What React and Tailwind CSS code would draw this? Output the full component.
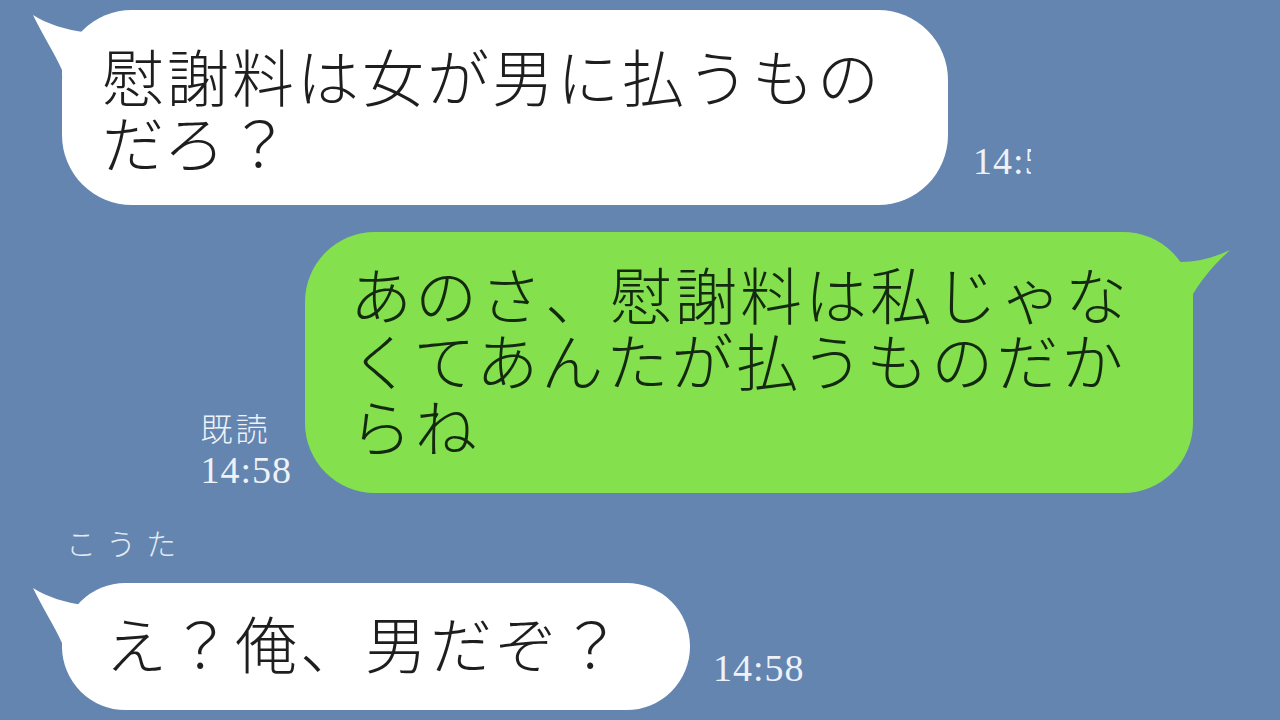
const cjk = "font-['Noto_Sans_CJK_JP','Noto_Sans_CJK_SC',sans-serif]"
const serif = "font-['Liberation_Serif',serif]"

// 左側（相手）の吹き出しのしっぽ
const LeftTail = () => (
  <svg className="absolute left-[-30px] top-0" width="80" height="66" viewBox="0 0 80 66">
    <path d="M1,5 C15,14 35,20 51,22 L80,12 L80,66 L30,66 L30,60 C22,42 10,24 1,5 Z" fill="#ffffff" />
  </svg>
)

// 右側（自分）の吹き出しのしっぽ
const RightTail = () => (
  <svg className="absolute right-[-40px] top-0" width="80" height="72" viewBox="0 0 80 72">
    <path d="M77,18 C60,26 45,30 27,30 L0,20 L0,72 L40,72 L40,62 C50,45 64,30 77,18 Z" fill="#84e14d" />
  </svg>
)

const Time = ({ children, className = "" }) => (
  <div className={`${serif} text-[38px] leading-[38px] tracking-[1px] text-[#eef2f8] whitespace-nowrap ${className}`}>
    {children}
  </div>
)

const App = () => {
  return (
    <div className={`w-[1280px] h-[720px] overflow-hidden bg-[#6385b0] ${cjk}`}>
      {/* 相手のメッセージ 1 */}
      <div className="flex items-end pt-[10px] pl-[62px]">
        <div className="relative w-[886px] h-[195px] rounded-[70px] bg-white pl-[40px] pt-[32px] text-[62px] leading-[66px] tracking-[3px] text-[#1e1e1e] font-light">
          <LeftTail />
          <div className="relative whitespace-nowrap">慰謝料は女が男に払うもの</div>
          <div className="relative whitespace-nowrap">だろ？</div>
        </div>
        <Time className="ml-[25px] mb-[25px] w-[58px] overflow-hidden">14:58</Time>
      </div>

      {/* 自分のメッセージ */}
      <div className="flex items-end justify-end mt-[27px] pr-[87px]">
        <div className="flex flex-col items-start mr-[13px] mb-[4px]">
          <div className={`${cjk} text-[32px] leading-[36px] tracking-[3px] text-[#eef2f8] font-light`}>既読</div>
          <Time className="mt-[6px]">14:58</Time>
        </div>
        <div className="relative w-[888px] h-[261px] rounded-[70px] bg-[#84e14d] pl-[45px] pt-[28px] text-[62px] leading-[66px] tracking-[3px] text-[#142a10] font-light">
          <RightTail />
          <div className="relative whitespace-nowrap">あのさ、慰謝料は私じゃな</div>
          <div className="relative whitespace-nowrap">くてあんたが払うものだか</div>
          <div className="relative whitespace-nowrap">らね</div>
        </div>
      </div>

      {/* 相手の名前 */}
      <div className="mt-[34px] pl-[66px] text-[30px] leading-[30px] tracking-[10px] text-[#e3eaf4] font-light">こうた</div>

      {/* 相手のメッセージ 2 */}
      <div className="flex items-end mt-[26px] pl-[62px]">
        <div className="relative w-[628px] h-[127px] rounded-[64px] bg-white pl-[43px] pt-[26px] text-[62px] leading-[66px] tracking-[3px] text-[#1e1e1e] font-light">
          <LeftTail />
          <div className="relative whitespace-nowrap">え？俺、男だぞ？</div>
        </div>
        <Time className="ml-[23px] mb-[23px]">14:58</Time>
      </div>
    </div>
  )
}

export default App
